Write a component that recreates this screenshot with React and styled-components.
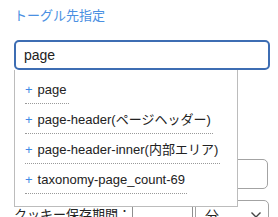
import React from "react";
import styled, { createGlobalStyle } from "styled-components";

const GlobalStyle = createGlobalStyle`
  html, body { margin: 0; padding: 0; background: #fff; }
  body {
    font-family: "Liberation Sans", "Noto Sans CJK JP", sans-serif;
    color: #222;
  }
`;

const Page = styled.div`
  padding: 8px 8px 0 14px;
  width: 278px;
  box-sizing: border-box;
`;

const Title = styled.div`
  font-size: 13px;
  line-height: 16px;
  color: #4a90e2;
`;

const SearchField = styled.div`
  position: relative;
  margin-top: 16px;
`;

const SearchInput = styled.div`
  box-sizing: border-box;
  width: 256px;
  height: 30px;
  border: 2px solid #3d6db3;
  border-radius: 5px;
  padding: 0 8px;
  display: flex;
  align-items: center;
  font-size: 14px;
  color: #222;
`;

const Menu = styled.ul`
  position: absolute;
  z-index: 2;
  top: 100%;
  left: 0;
  box-sizing: border-box;
  width: 224px;
  margin: 0;
  list-style: none;
  padding: 11px 10px 12px;
  background: #fff;
  border: 1px solid #bcbcbc;
  border-top: none;
`;

const MenuItem = styled.li`
  display: flex;
  & + & { margin-top: 7px; }
`;

const ItemLabel = styled.span`
  display: block;
  font-size: 13px;
  line-height: 17px;
  padding: 0 2px 5px 0;
  border-bottom: 1px dotted #9a9a9a;
  color: #222;
`;

const Plus = styled.span`
  color: #3f8ae6;
  margin-right: 5px;
`;

const RowA = styled.div`
  margin-top: 89px;
  display: flex;
  justify-content: flex-end;
  margin-right: 2px;
`;

const TextBox = styled.div`
  box-sizing: border-box;
  width: ${(p) => p.$w}px;
  height: 30px;
  border: 1px solid #a3a3a3;
  border-radius: ${(p) => p.$r || 0}px;
  background: #fff;
`;

const RowB = styled.div`
  margin-top: 11px;
  display: flex;
  align-items: center;
`;

const RowLabel = styled.div`
  font-size: 13px;
  line-height: 16px;
  color: #222;
`;

const NumInput = styled(TextBox)`
  margin-left: 1px;
  border-color: #8f8f8f;
`;

const Select = styled.div`
  box-sizing: border-box;
  margin-left: 2px;
  width: 74px;
  height: 30px;
  border: 1px solid #a3a3a3;
  border-radius: 5px;
  display: flex;
  align-items: center;
  justify-content: space-between;
  padding: 0 6px 0 9px;
  font-size: 14px;
  color: #222;
`;

const items = [
  "page",
  "page-header(ページヘッダー)",
  "page-header-inner(内部エリア)",
  "taxonomy-page_count-69",
];

export default function App() {
  return (
    <>
      <GlobalStyle />
      <Page>
        <Title>トーグル先指定</Title>
        <SearchField>
          <SearchInput>page</SearchInput>
          <Menu>
            {items.map((t) => (
              <MenuItem key={t}>
                <ItemLabel>
                  <Plus>+</Plus>
                  {t}
                </ItemLabel>
              </MenuItem>
            ))}
          </Menu>
        </SearchField>
        <RowA>
          <TextBox $w={200} $r={5} />
        </RowA>
        <RowB>
          <RowLabel>クッキー保存期間：</RowLabel>
          <NumInput $w={61} />
          <Select>
            <span>分</span>
            <svg width="12" height="8" viewBox="0 0 12 8">
              <path d="M1.5 1.5 L6 6 L10.5 1.5" fill="none" stroke="#444" strokeWidth="1.4" />
            </svg>
          </Select>
        </RowB>
      </Page>
    </>
  );
}
